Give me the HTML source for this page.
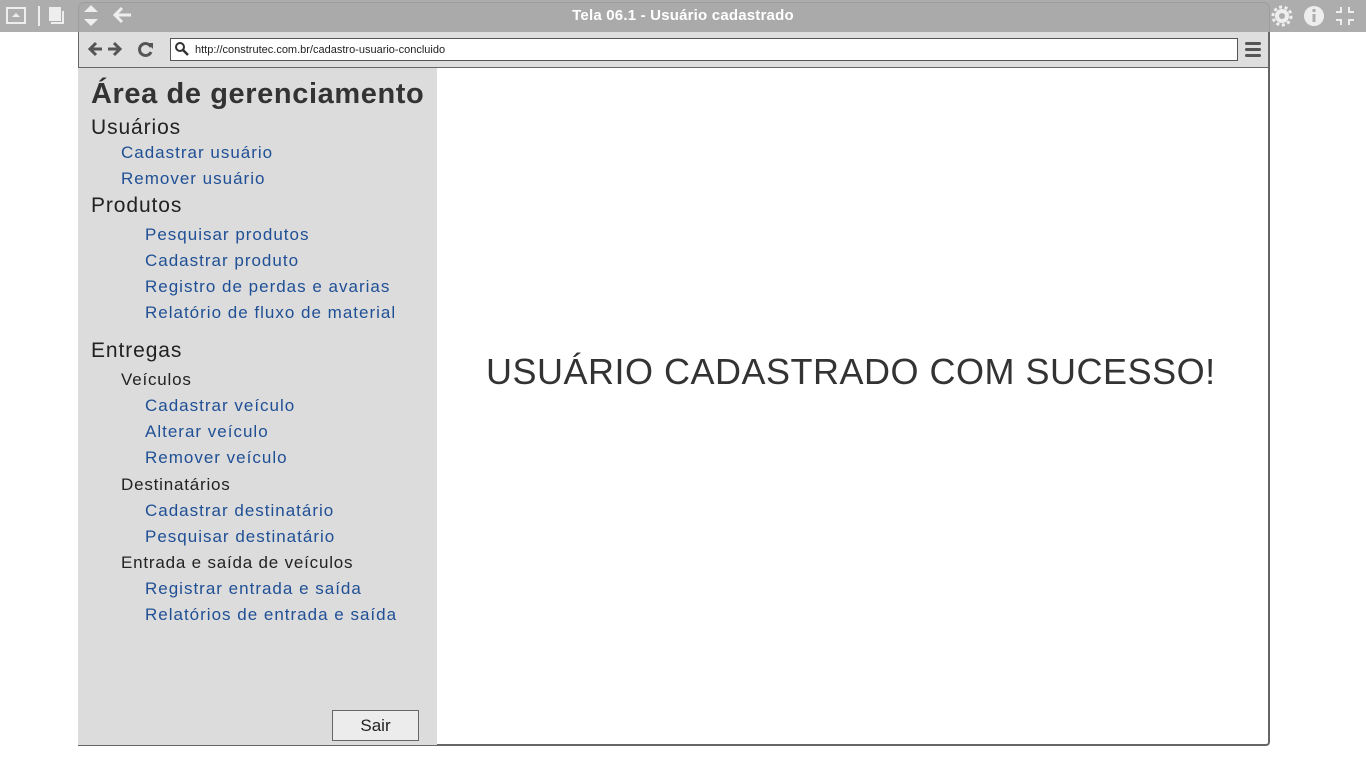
<!DOCTYPE html>
<html><head><meta charset="utf-8"><style>
*{margin:0;padding:0;box-sizing:border-box}
body{width:1366px;height:768px;background:#fff;font-family:"Liberation Sans",sans-serif;position:relative;overflow:hidden}
.top{position:absolute;left:0;top:0;width:1366px;height:32px;background:#adadad}
.win{position:absolute;left:78px;top:2px;width:1192px;height:30px;background:#aaa;border-radius:6px 6px 0 0;border:1px solid #9d9d9d;border-bottom:none}
.title{position:absolute;left:0;width:1366px;top:7px;text-align:center;color:#fff;font-size:15px;font-weight:bold;letter-spacing:0.2px}
.tb{position:absolute;left:78px;top:32px;width:1192px;height:36px;background:#dedede;border-left:1px solid #666;border-right:2px solid #666;border-bottom:1px solid #666}
.url{position:absolute;left:170px;top:38px;width:1068px;height:23px;background:#fff;border:1px solid #555;font-size:11px;padding:5px 0 0 24px;color:#222}
.content{position:absolute;left:78px;top:68px;width:1192px;height:678px;border-right:2px solid #666;border-bottom:2px solid #666;border-radius:0 0 4px 0}
.side{position:absolute;left:78px;top:68px;width:359px;height:677px;background:#dcdcdc}
.t{position:absolute;white-space:nowrap;color:#222}
.l{color:#1f4f95;font-size:17px;letter-spacing:1px}
.h{font-size:21px;letter-spacing:0.9px}
.s{font-size:17px;letter-spacing:0.8px}
.btn{position:absolute;left:332px;top:710px;width:87px;height:31px;border:1px solid #666;background:#ececec;text-align:center;font-size:17px;padding-top:5px;color:#222}
</style></head><body>
<div class="top"></div>
<div class="win"></div>
<div class="title">Tela 06.1 - Usuário cadastrado</div>
<svg style="position:absolute;left:0;top:0" width="140" height="32">
<rect x="7" y="8" width="18" height="15" fill="none" stroke="#eee" stroke-width="2"/><path d="M12 17l4-4 4 4z" fill="#eee"/>
<rect x="38" y="6" width="2" height="20" fill="#eee"/>
<rect x="49" y="7" width="12" height="14" fill="#eee"/><path d="M63 11v12h-12" fill="none" stroke="#eee" stroke-width="2"/>
<path d="M84 12l7-7 7 7zM84 19l7 7 7-7z" fill="#eee"/>
<path d="M131 15h-15M122 8l-7 7 7 7" fill="none" stroke="#eee" stroke-width="3"/>
</svg>
<svg style="position:absolute;left:1270px;top:0" width="96" height="32">
<circle cx="12" cy="16" r="7" fill="#eee"/><circle cx="12" cy="16" r="9" fill="none" stroke="#eee" stroke-width="3" stroke-dasharray="3 2.6"/><circle cx="12" cy="16" r="3" fill="#adadad"/>
<circle cx="44" cy="16" r="10" fill="#eee"/><rect x="42.5" y="14" width="3" height="8" fill="#adadad"/><rect x="42.5" y="9" width="3" height="3" fill="#adadad"/>
<path d="M71 7v5h-5M79 7v5h5M71 25v-5h-5M79 25v-5h5" fill="none" stroke="#eee" stroke-width="2"/>
</svg>
<div class="tb"></div>
<svg style="position:absolute;left:85px;top:38px" width="80" height="22">
<path d="M17 11h-11M11 5l-6 6 6 6" fill="none" stroke="#555" stroke-width="3"/>
<path d="M23 11h11M29 5l6 6-6 6" fill="none" stroke="#555" stroke-width="3"/>
<path d="M66 9a6 6 0 1 0 0 5" fill="none" stroke="#555" stroke-width="3"/><path d="M62 5l6 0 0 6z" fill="#555"/>
</svg>
<div class="url">http://construtec.com.br/cadastro-usuario-concluido</div>
<svg style="position:absolute;left:174px;top:41px" width="16" height="16"><circle cx="6" cy="6" r="4" fill="none" stroke="#333" stroke-width="2"/><path d="M9 9l5 5" stroke="#333" stroke-width="2.5"/></svg>
<svg style="position:absolute;left:1245px;top:41px" width="18" height="17"><rect x="0" y="1" width="16" height="3" rx="1.5" fill="#555"/><rect x="0" y="7" width="16" height="3" rx="1.5" fill="#555"/><rect x="0" y="13" width="16" height="3" rx="1.5" fill="#555"/></svg>
<div class="content"></div>
<div class="side"></div>
<div class="t" style="left:91px;top:78px;font-size:29px;font-weight:bold;color:#333;letter-spacing:0.6px">Área de gerenciamento</div>
<div class="t h" style="left:91px;top:116px">Usuários</div>
<div class="t l" style="left:121px;top:143px">Cadastrar usuário</div>
<div class="t l" style="left:121px;top:169px">Remover usuário</div>
<div class="t h" style="left:91px;top:194px">Produtos</div>
<div class="t l" style="left:145px;top:225px">Pesquisar produtos</div>
<div class="t l" style="left:145px;top:251px">Cadastrar produto</div>
<div class="t l" style="left:145px;top:277px">Registro de perdas e avarias</div>
<div class="t l" style="left:145px;top:303px">Relatório de fluxo de material</div>
<div class="t h" style="left:91px;top:339px">Entregas</div>
<div class="t s" style="left:121px;top:370px">Veículos</div>
<div class="t l" style="left:145px;top:396px">Cadastrar veículo</div>
<div class="t l" style="left:145px;top:422px">Alterar veículo</div>
<div class="t l" style="left:145px;top:448px">Remover veículo</div>
<div class="t s" style="left:121px;top:475px">Destinatários</div>
<div class="t l" style="left:145px;top:501px">Cadastrar destinatário</div>
<div class="t l" style="left:145px;top:527px">Pesquisar destinatário</div>
<div class="t s" style="left:121px;top:553px">Entrada e saída de veículos</div>
<div class="t l" style="left:145px;top:579px">Registrar entrada e saída</div>
<div class="t l" style="left:145px;top:605px">Relatórios de entrada e saída</div>
<div class="btn">Sair</div>
<div class="t" style="left:486px;top:351px;font-size:36px;color:#333;letter-spacing:0.5px">USUÁRIO CADASTRADO COM SUCESSO!</div>
</body></html>
